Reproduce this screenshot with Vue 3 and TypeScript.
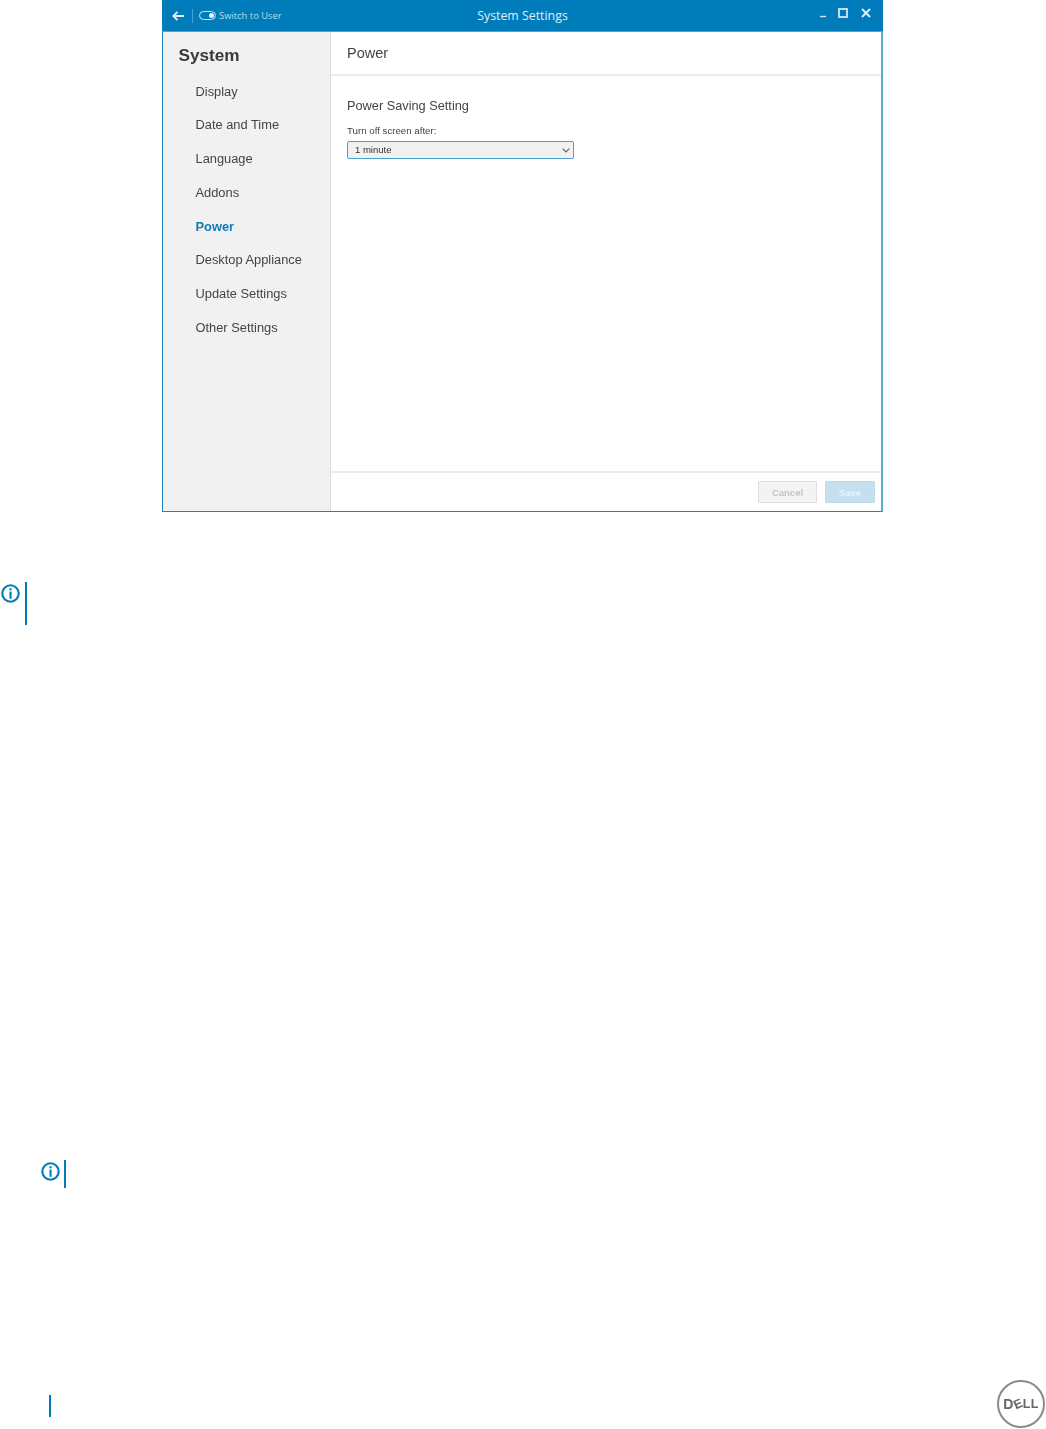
<script setup lang="ts">
const navItems: string[] = ['Display', 'Date and Time', 'Language', 'Addons', 'Power', 'Desktop Appliance', 'Update Settings', 'Other Settings']
</script>

<template>
  <div class="page">
    <section class="window">
      <header class="titlebar">
        <div class="tb-left">
          <svg class="back" width="12" height="10" viewBox="0 0 12 10"><path d="M5.5 0.8 1.3 5l4.2 4.2M1.5 5H12" fill="none" stroke="#e3f0f8" stroke-width="1.9"/></svg>
          <span class="tb-sep"></span>
          <span class="toggle"><span class="knob"></span></span>
          <span class="switch-label">Switch to User</span>
        </div>
        <div class="tb-title">System Settings</div>
        <div class="tb-controls">
          <svg width="7" height="10" viewBox="0 0 7 10"><path d="M0 8.5H6" stroke="#d5e8f3" stroke-width="1.4"/></svg>
          <svg width="10" height="10" viewBox="0 0 10 10"><rect x="1" y="1" width="8" height="8" fill="none" stroke="#d5e8f3" stroke-width="1.8"/></svg>
          <svg width="10" height="10" viewBox="0 0 10 10"><path d="M1 1l8 8M9 1 1 9" stroke="#e3f0f8" stroke-width="1.9"/></svg>
        </div>
      </header>
      <div class="body">
        <aside class="sidebar">
          <h1 class="side-title">System</h1>
          <ul class="nav">
            <li v-for="item in navItems" :key="item" :class="{ active: item === 'Power' }">{{ item }}</li>
          </ul>
        </aside>
        <main class="content">
          <div class="content-head">Power</div>
          <div class="content-main">
            <h2 class="section-title">Power Saving Setting</h2>
            <div class="field-label">Turn off screen after:</div>
            <div class="select">
              <span class="select-value">1 minute</span>
              <svg width="8" height="5" viewBox="0 0 8 5"><path d="M0.7 0.7 4 4l3.3-3.3" fill="none" stroke="#666" stroke-width="1.2"/></svg>
            </div>
          </div>
          <footer class="content-foot">
            <button class="btn cancel" type="button">Cancel</button>
            <button class="btn save" type="button">Save</button>
          </footer>
        </main>
      </div>
    </section>

    <div class="note note-one">
      <svg class="info" width="19" height="19" viewBox="0 0 19 19"><circle cx="9.5" cy="9.5" r="8.2" fill="none" stroke="#007db8" stroke-width="2.1"/><rect x="8.5" y="4.2" width="2.1" height="2.2" fill="#007db8"/><rect x="8.5" y="7.6" width="2.1" height="7.2" fill="#007db8"/></svg>
      <span class="rule rule-one"></span>
    </div>

    <div class="note note-two">
      <svg class="info" width="19" height="19" viewBox="0 0 19 19"><circle cx="9.5" cy="9.5" r="8.2" fill="none" stroke="#007db8" stroke-width="2.1"/><rect x="8.5" y="4.2" width="2.1" height="2.2" fill="#007db8"/><rect x="8.5" y="7.6" width="2.1" height="7.2" fill="#007db8"/></svg>
      <span class="rule rule-two"></span>
    </div>

    <div class="page-foot">
      <span class="rule rule-foot"></span>
      <div class="dell">
        <span class="dell-word"><span class="dell-d">D</span><span class="dell-e">E</span><span class="dell-ll">LL</span></span>
      </div>
    </div>
  </div>
</template>

<style>
html, body { margin: 0; background: #fff; }
</style>

<style scoped>
.page {
  width: 1046px;
  height: 1429px;
  overflow: hidden;
  background: #fff;
  font-family: "Liberation Sans", Arial, sans-serif;
  display: flex;
  flex-direction: column;
}
.window {
  margin-left: 162px;
  width: 721px;
  height: 512px;
  box-sizing: border-box;
  border: 1px solid #1a86bf;
  border-top: 0;
  border-right-width: 2px;
  border-right-color: #5dabd3;
  display: flex;
  flex-direction: column;
  flex: none;
  filter: blur(0.45px);
}
.titlebar {
  height: 32px;
  flex: none;
  margin: 0 -2px 0 -1px;
  background: #007cba;
  display: grid;
  grid-template-columns: 1fr auto 1fr;
  align-items: center;
  color: #dcecf5;
  border-bottom: 1px solid #4fa3d0;
  box-sizing: border-box;
}
.tb-left { display: flex; align-items: center; padding-left: 10px; }
.back { margin-right: 8px; }
.tb-sep { width: 1px; height: 14px; background: #4b9fcb; margin-right: 6px; }
.toggle {
  width: 14px; height: 7px; border: 1px solid #cfe4f0; border-radius: 5px;
  display: flex; align-items: center; justify-content: flex-end; margin-right: 3px;
  padding-right: 1px;
}
.knob { width: 5px; height: 5px; border-radius: 50%; background: #f0f7fb; }
.switch-label { font-size: 9.4px; color: #bcd9ea; font-family: "Open Sans", sans-serif; }
.tb-title { font-size: 12.35px; color: #e0eef6; font-family: "Open Sans", sans-serif; }
.tb-controls { display: flex; justify-content: flex-end; align-items: center; gap: 13px; padding-right: 12px; margin-top: -5px; }
.tb-controls svg:first-child { margin-right: -2px; }
.body { flex: 1; display: flex; min-height: 0; }
.sidebar {
  width: 168px;
  flex: none;
  background: #f1f1f1;
  border-right: 1px solid #dcdcdc;
  box-sizing: border-box;
  padding: 14px 0 0 15.5px;
}
.side-title { margin: 0; font-size: 17.2px; line-height: 18px; font-weight: 700; color: #3a3a3a; }
.nav { list-style: none; margin: 10.6px 0 0; padding: 0 0 0 17px; }
.nav li { height: 33.75px; line-height: 33.75px; font-size: 12.85px; color: #444; white-space: nowrap; }
.nav li.active { color: #0f7cb5; font-weight: 700; }
.content { flex: 1; display: flex; flex-direction: column; min-width: 0; }
.content-head {
  height: 44px; flex: none; box-sizing: border-box; padding: 12px 0 0 16px;
  border-bottom: 2px solid #ececec; font-size: 14.5px; line-height: 18px; color: #444;
}
.content-main { flex: 1; padding: 22px 0 0 16px; }
.section-title { margin: 0; font-size: 12.75px; line-height: 16px; font-weight: 400; color: #444; }
.field-label { margin-top: 11px; font-size: 9.7px; line-height: 12px; color: #444; }
.select {
  margin-top: 4px; width: 227px; height: 18px; box-sizing: border-box;
  border: 1px solid #4d9fcb; border-radius: 2px; background: #f1f1f1;
  display: flex; align-items: center; justify-content: space-between;
  padding: 0 3px 0 7px; font-size: 9.5px; color: #333;
}
.select-value { margin-bottom: 2px; }
.content-foot {
  height: 40px; flex: none; box-sizing: border-box; border-top: 2px solid #ececec;
  display: flex; justify-content: flex-end; align-items: flex-start; gap: 8px; padding: 8px 6px 0 0;
}
.btn {
  height: 22px; padding: 0; border-radius: 1px; box-sizing: border-box;
  font-family: "Liberation Sans", Arial, sans-serif; font-size: 9.5px; font-weight: 700;
}
.cancel { width: 59px; background: #f3f3f3; border: 1px solid #e0e0e0; color: #c4c4c4; }
.save { width: 50px; background: #c4e0ef; border: 1px solid #bcdcec; color: #e9f4f9; }
.note, .page-foot { display: flex; flex: none; }
.rule { display: block; width: 2px; background: #007db8; flex: none; }
.note-one { margin-top: 70px; padding-left: 1px; height: 43px; }
.note-one .info { margin-top: 2px; }
.rule-one { height: 43px; margin-left: 5px; }
.note-two { margin-top: 535px; padding-left: 41px; height: 28px; }
.note-two .info { margin-top: 2px; }
.rule-two { height: 28px; margin-left: 4px; }
.page-foot { margin-top: 192px; padding-left: 49px; height: 48px; position: relative; }
.rule-foot { height: 22px; margin-top: 15px; }
.dell {
  position: absolute; left: 997px; top: 0; width: 48px; height: 48px; box-sizing: border-box;
  border: 2.5px solid #8a8a8a; border-radius: 50%;
  display: flex; align-items: center; justify-content: center; filter: blur(0.4px);
}
.dell-word { font-weight: 700; color: #666; display: flex; align-items: center; line-height: 1; }
.dell-d { font-size: 14px; }
.dell-e { display: inline-block; transform: rotate(-25deg); margin: 0 0.5px; font-size: 12.5px; }
.dell-ll { letter-spacing: 0.4px; font-size: 12.5px; }
</style>
